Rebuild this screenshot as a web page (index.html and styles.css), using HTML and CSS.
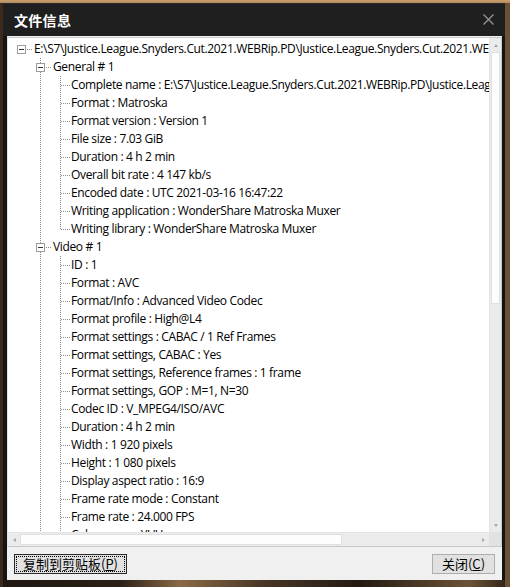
FILE: index.html
```html
<!DOCTYPE html>
<html lang="zh-CN">
<head>
<meta charset="utf-8">
<title>文件信息</title>
<link rel="stylesheet" href="styles.css">
</head>
<body>
<div class="desk">
  <div class="dialog">
    <div class="titlebar">
      <span class="title">文件信息</span>
      <svg class="close" width="11" height="11" viewBox="0 0 11 11"><path d="M0.5 0.5 L10.5 10.5 M10.5 0.5 L0.5 10.5" stroke="#9a9a9a" stroke-width="1.2" fill="none"/></svg>
    </div>
    <div class="content">
      <div class="tree">
        <div class="viewport">
          <div class="row row-0"><span class="box"></span><span class="stub"></span><span class="label">E:\S7\Justice.League.Snyders.Cut.2021.WEBRip.PD\Justice.League.Snyders.Cut.2021.WEBRip.PD.mkv</span></div>
          <div class="kids kids-1">
            <div class="row row-1"><span class="box"></span><span class="stub"></span><span class="label">General # 1</span></div>
            <div class="kids kids-2 kids-end">
              <div class="row row-2"><span class="leaf"></span><span class="label">Complete name : E:\S7\Justice.League.Snyders.Cut.2021.WEBRip.PD\Justice.League.Snyders.Cut.2021.WEBRip.PD.mkv</span></div>
              <div class="row row-2"><span class="leaf"></span><span class="label">Format : Matroska</span></div>
              <div class="row row-2"><span class="leaf"></span><span class="label">Format version : Version 1</span></div>
              <div class="row row-2"><span class="leaf"></span><span class="label">File size : 7.03 GiB</span></div>
              <div class="row row-2"><span class="leaf"></span><span class="label">Duration : 4 h 2 min</span></div>
              <div class="row row-2"><span class="leaf"></span><span class="label">Overall bit rate : 4 147 kb/s</span></div>
              <div class="row row-2"><span class="leaf"></span><span class="label">Encoded date : UTC 2021-03-16 16:47:22</span></div>
              <div class="row row-2"><span class="leaf"></span><span class="label">Writing application : WonderShare Matroska Muxer</span></div>
              <div class="row row-2"><span class="leaf"></span><span class="label">Writing library : WonderShare Matroska Muxer</span></div>
            </div>
            <div class="row row-1"><span class="box"></span><span class="stub"></span><span class="label">Video # 1</span></div>
            <div class="kids kids-2">
              <div class="row row-2"><span class="leaf"></span><span class="label">ID : 1</span></div>
              <div class="row row-2"><span class="leaf"></span><span class="label">Format : AVC</span></div>
              <div class="row row-2"><span class="leaf"></span><span class="label">Format/Info : Advanced Video Codec</span></div>
              <div class="row row-2"><span class="leaf"></span><span class="label">Format profile : High@L4</span></div>
              <div class="row row-2"><span class="leaf"></span><span class="label">Format settings : CABAC / 1 Ref Frames</span></div>
              <div class="row row-2"><span class="leaf"></span><span class="label">Format settings, CABAC : Yes</span></div>
              <div class="row row-2"><span class="leaf"></span><span class="label">Format settings, Reference frames : 1 frame</span></div>
              <div class="row row-2"><span class="leaf"></span><span class="label">Format settings, GOP : M=1, N=30</span></div>
              <div class="row row-2"><span class="leaf"></span><span class="label">Codec ID : V_MPEG4/ISO/AVC</span></div>
              <div class="row row-2"><span class="leaf"></span><span class="label">Duration : 4 h 2 min</span></div>
              <div class="row row-2"><span class="leaf"></span><span class="label">Width : 1 920 pixels</span></div>
              <div class="row row-2"><span class="leaf"></span><span class="label">Height : 1 080 pixels</span></div>
              <div class="row row-2"><span class="leaf"></span><span class="label">Display aspect ratio : 16:9</span></div>
              <div class="row row-2"><span class="leaf"></span><span class="label">Frame rate mode : Constant</span></div>
              <div class="row row-2"><span class="leaf"></span><span class="label">Frame rate : 24.000 FPS</span></div>
              <div class="row row-2"><span class="leaf"></span><span class="label">Color space : YUV</span></div>
              <div class="row row-2"><span class="leaf"></span><span class="label">Chroma subsampling : 4:2:0</span></div>
            </div>
          </div>
        </div>
        <div class="vscroll">
          <span class="arrow up"></span>
          <span class="vthumb"></span>
          <span class="vtrack"></span>
          <span class="arrow down"></span>
        </div>
        <div class="hscroll">
          <span class="arrow left"></span>
          <span class="hthumb"></span>
          <span class="htrack"></span>
          <span class="arrow right"></span>
        </div>
        <div class="corner"></div>
      </div>
      <div class="buttons">
        <button class="btn btn-default"><span class="focus">复制到剪贴板(<u>P</u>)</span></button>
        <button class="btn btn-close">关闭(<u>C</u>)</button>
      </div>
    </div>
  </div>
</div>
</body>
</html>
```

FILE: styles.css
```css
html, body {
  margin: 0;
  padding: 0;
}

body {
  width: 510px;
  height: 587px;
  overflow: hidden;
  font-family: "Open Sans", "Noto Sans", "Noto Sans CJK SC", sans-serif;
}

/* wallpaper peeking around the dialog */
.desk {
  width: 510px;
  height: 587px;
  box-sizing: border-box;
  padding: 3px 5px 7px 3px;
  background:
    linear-gradient(to bottom, #c9a272 0, #b38a5a 3px, transparent 3px),
    linear-gradient(to right, #3b2a1c 0, #3b2a1c 3px, transparent 3px, transparent 505px, #6a5037 505px),
    linear-gradient(to right, #1e1610 0, #2a2017 120px, #8a6a45 180px, #4a3828 260px, #231a12 360px, #6d5336 470px, #2a2018 510px);
}

.dialog {
  height: 100%;
  background: #141414;
  display: flex;
  flex-direction: column;
}

.titlebar {
  height: 33px;
  flex: none;
  display: flex;
  align-items: center;
  justify-content: space-between;
  padding: 0 11px 1px 11px;
  background: #1f1f1f;
  border-top: 1px solid #2a2a2a;
  box-sizing: border-box;
}

.title {
  color: #ffffff;
  font-family: "Noto Sans CJK SC", sans-serif;
  font-weight: 700;
  font-size: 14px;
  letter-spacing: 0.3px;
}

.close {
  display: block;
}

.content {
  flex: 1;
  margin: 0 3px 0 4px;
  background: #f0f0f0;
  display: flex;
  flex-direction: column;
}

/* tree view with its scroll bars */
.tree {
  height: 510px;
  margin-top: 1px;
  box-sizing: border-box;
  border: 1px solid #c8c8c8;
  border-left-color: #e2e2e2;
  background: #ffffff;
  display: grid;
  grid-template-columns: 1fr 12px;
  grid-template-rows: 1fr 14px;
}

.viewport {
  overflow: hidden;
  padding-top: 2px;
  font-size: 12px;
  letter-spacing: -0.35px;
  color: #000;
}

.row {
  height: 18px;
  display: flex;
  align-items: center;
  white-space: nowrap;
}

.row-0 { padding-left: 9px; }
.row-1 { padding-left: 28px; }
.row-2 { padding-left: 52px; }

.label {
  line-height: 18px;
}

.box {
  flex: none;
  width: 7px;
  height: 7px;
  border: 1px solid #9c9c9c;
  background: #fff linear-gradient(#333, #333) center / 5px 1px no-repeat;
}

.stub {
  flex: none;
  width: 5px;
  height: 1px;
  margin: 0 2px 0 1px;
  background: linear-gradient(to right, #8a8a8a 50%, transparent 50%) 0 0 / 2px 1px repeat-x;
}

.leaf {
  flex: none;
  width: 10px;
  height: 1px;
  margin-right: 1px;
  background: linear-gradient(to right, #8a8a8a 50%, transparent 50%) 1px 0 / 2px 1px repeat-x;
}

/* dotted sibling lines */
.kids-1 {
  background: linear-gradient(#8a8a8a 50%, transparent 50%) 32px 0 / 1px 2px repeat-y;
}

.kids-2 {
  background: linear-gradient(#8a8a8a 50%, transparent 50%) 52px 0 / 1px 2px repeat-y;
}

/* last group: the line stops at the middle of its last row */
.kids-end {
  background:
    linear-gradient(#fff, #fff) 52px calc(100% - 0px) / 1px 8px no-repeat,
    linear-gradient(#8a8a8a 50%, transparent 50%) 52px 0 / 1px 2px repeat-y;
}

.vscroll {
  grid-row: 1;
  grid-column: 2;
  display: flex;
  flex-direction: column;
  background: #ebebeb;
  border-left: 1px solid #e4e4e4;
}

.hscroll {
  grid-row: 2;
  grid-column: 1;
  display: flex;
  background: #ebebeb;
  border-top: 1px solid #e4e4e4;
}

.corner {
  grid-row: 2;
  grid-column: 2;
  background: #e2e2e2;
}

.arrow {
  flex: none;
  display: flex;
  align-items: center;
  justify-content: center;
}

.arrow.up, .arrow.down { height: 14px; }
.arrow.left, .arrow.right { width: 12px; }

.arrow::before {
  content: "";
  border: 2px solid transparent;
}

.arrow.up::before { border-bottom: 3px solid #a8a8a8; border-top-width: 0; }
.arrow.down::before { border-top: 3px solid #a8a8a8; border-bottom-width: 0; }
.arrow.left::before { border-right: 3px solid #a8a8a8; border-left-width: 0; }
.arrow.right::before { border-left: 3px solid #a8a8a8; border-right-width: 0; }

.vthumb {
  flex: none;
  height: 250px;
  margin: 0 1px;
  background: #fdfdfd;
  border: 1px solid #e0e0e0;
}

.vtrack, .htrack { flex: 1; }

.hthumb {
  flex: none;
  width: 320px;
  margin: 1px 0;
  background: #fdfdfd;
  border: 1px solid #e0e0e0;
}

/* dialog buttons */
.buttons {
  flex: 1;
  display: flex;
  justify-content: space-between;
  align-items: center;
  padding: 0 7px;
}

.btn {
  height: 20px;
  padding: 0;
  font-family: "Noto Sans CJK SC", sans-serif;
  font-size: 13px;
  color: #000;
  background: #e1e1e1;
  display: flex;
  align-items: center;
  justify-content: center;
  box-sizing: border-box;
}

.btn u {
  text-underline-offset: 1px;
}

.btn-default {
  width: 113px;
  border: 1px solid #2b2b2b;
  padding: 1px;
}

.focus {
  flex: 1;
  align-self: stretch;
  display: flex;
  align-items: center;
  justify-content: center;
  outline: 1px dotted #000;
  outline-offset: -1px;
}

.btn-close {
  width: 63px;
  border: 1px solid #adadad;
}
```
